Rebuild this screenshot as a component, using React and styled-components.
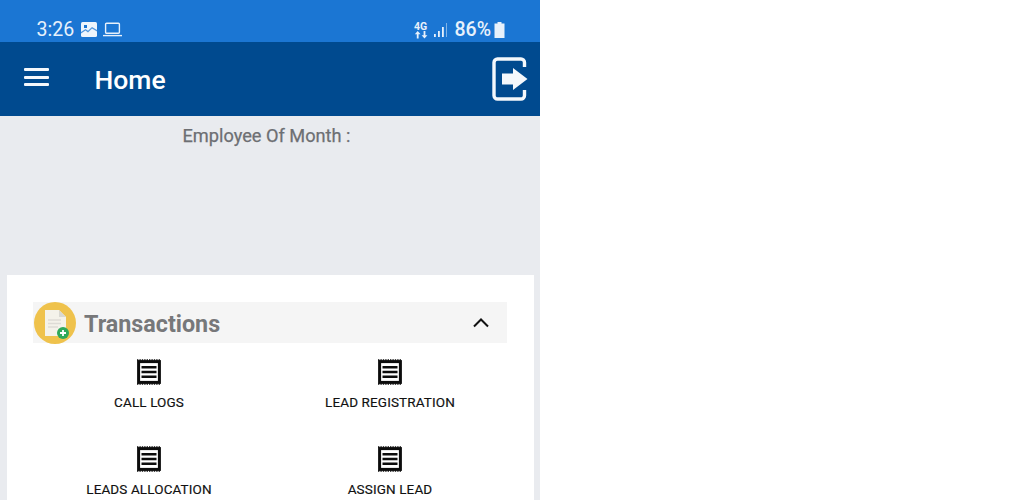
import React from "react";
import styled, { createGlobalStyle } from "styled-components";

const Global = createGlobalStyle`
  html, body { margin: 0; padding: 0; background: #fff; overflow: hidden; }
  body { font-family: Roboto, "Liberation Sans", sans-serif; }
`;

const Phone = styled.div`
  width: 540px;
  height: 500px;
  background: #e9ebef;
  display: flex;
  flex-direction: column;
  overflow: hidden;
`;

const StatusBar = styled.div`
  height: 42px;
  flex: none;
  box-sizing: border-box;
  background: #1b76d3;
  color: #e8f1fb;
  display: flex;
  align-items: center;
  padding: 17px 35px 0 36.5px;
`;

const Time = styled.span`
  font-size: 19.5px;
  line-height: 24px;
  margin-right: 7px;
`;

const StatusGroup = styled.div`
  display: flex;
  align-items: center;
  gap: 6px;
`;

const Spacer = styled.div`
  flex: 1;
`;

const Battery = styled.span`
  font-size: 19.5px;
  font-weight: 500;
  line-height: 24px;
  margin: 0 -3px 0 0;
`;

const AppBar = styled.header`
  height: 74px;
  flex: none;
  box-sizing: border-box;
  background: #004a8f;
  color: #fff;
  display: flex;
  align-items: center;
  padding: 0 12px 0 24px;
`;

const MenuButton = styled.div`
  width: 25px;
  height: 18px;
  display: flex;
  flex-direction: column;
  justify-content: space-between;
  margin: 0 45.5px 4px 0;
`;

const MenuLine = styled.span`
  display: block;
  height: 3px;
  border-radius: 1px;
  background: #f4f8fc;
`;

const Title = styled.h1`
  margin: 2px 0 0;
  flex: 1;
  font-size: 26.5px;
  font-weight: 500;
  line-height: 32px;
`;

const Intro = styled.div`
  height: 159px;
  flex: none;
  box-sizing: border-box;
  padding: 8px 7px 0 0;
  text-align: center;
  color: #6d6f73;
  font-size: 18.2px;
  font-weight: 400;
  -webkit-text-stroke: 0.25px #6d6f73;
  line-height: 24px;
`;

const Card = styled.section`
  flex: 1;
  margin: 0 6px 0 7px;
  background: #fff;
  padding: 27px 27px 0 26px;
`;

const SectionHeader = styled.div`
  height: 41px;
  background: #f5f5f5;
  display: flex;
  align-items: center;
  padding-right: 17px;
`;

const Badge = styled.div`
  width: 42px;
  height: 42px;
  flex: none;
  margin-left: 1px;
  margin-right: 8px;
`;

const SectionTitle = styled.h2`
  margin: 2px 0 0;
  flex: 1;
  color: #77787a;
  font-size: 23.3px;
  font-weight: 700;
  line-height: 28px;
`;

const Grid = styled.div`
  display: grid;
  grid-template-columns: 232px 250px;
  grid-auto-rows: 87px;
  padding-top: 16px;
`;

const Tile = styled.div`
  display: flex;
  flex-direction: column;
  align-items: center;
`;

const TileLabel = styled.span`
  margin-top: 8px;
  color: #111;
  font-size: 13.5px;
  font-weight: 400;
  -webkit-text-stroke: 0.15px #111;
  line-height: 18px;
  letter-spacing: 0.12px;
  white-space: nowrap;
`;

const ReceiptIcon = () => (
  <svg width="26" height="26" viewBox="0 0 26 26" fill="none">
    <rect x="2.6" y="2.6" width="20.8" height="20.8" stroke="#0c0c0c" strokeWidth="3" />
    <path d="M1 1H25M1 25H25" stroke="#0c0c0c" strokeWidth="1.6" strokeDasharray="1.4 1" />
    <path d="M5.5 8.3H20.5M5.5 13H20.5M5.5 17.7H20.5" stroke="#0c0c0c" strokeWidth="2.4" />
  </svg>
);

const GalleryIcon = () => (
  <svg width="16" height="16" viewBox="0 0 16 16">
    <rect width="16" height="15" rx="1.5" fill="#eef5fc" />
    <rect x="3" y="3" width="3" height="3" fill="#1b76d3" />
    <path d="M0 11.5 4.5 8.5l2.5 2L11 6.5l5 3V8L11 5 7 8.8 4.5 7 0 10Z" fill="#1b76d3" opacity="0.75" />
  </svg>
);

const LaptopIcon = () => (
  <svg width="19" height="16" viewBox="0 0 19 16" fill="none" stroke="#e8f1fb" strokeWidth="1.4">
    <rect x="2.6" y="1.2" width="13.8" height="10" rx="1" />
    <path d="M0 13.6H19" />
  </svg>
);

const NetworkIcon = () => (
  <svg width="14" height="18" viewBox="0 0 14 18" fill="#e8f1fb">
    <text x="0" y="8.5" fontSize="10.5" fontWeight="700" fontFamily="Roboto, sans-serif">4G</text>
    <path d="M.8 13.2 3.7 10 6.6 13.2H4.6V17.5H2.8V13.2Z" />
    <path d="M8.6 10H10.4V14.3H12.4L9.5 17.5 6.6 14.3H8.6Z" transform="translate(1 0)" />
  </svg>
);

const SignalIcon = () => (
  <svg width="14" height="16" viewBox="0 0 14 16" fill="#e8f1fb">
    <rect x="0" y="12" width="1.8" height="3" />
    <rect x="4" y="9" width="1.8" height="6" />
    <rect x="8" y="5" width="1.8" height="10" />
    <rect x="12" y="1" width="1" height="14" opacity="0.5" />
  </svg>
);

const BatteryIcon = () => (
  <svg width="11" height="16" viewBox="0 0 11 16" fill="#e8f1fb">
    <path d="M3.5 0H7.5V1.5H10.5V16H.5V1.5H3.5Z" />
  </svg>
);

const ExitIcon = () => (
  <svg width="36" height="44" viewBox="0 0 36 44" fill="none">
    <path
      d="M32.5 10V5.5A3.5 3.5 0 0 0 29 2H5.5A3.5 3.5 0 0 0 2 5.5V38.5A3.5 3.5 0 0 0 5.5 42H29A3.5 3.5 0 0 0 32.5 38.5V33"
      stroke="#f4f8fc"
      strokeWidth="3.4"
    />
    <path d="M10 16.5H21V11L35.5 22 21 33V27.5H10Z" fill="#f4f8fc" />
  </svg>
);

const DocumentBadge = () => (
  <svg width="42" height="42" viewBox="0 0 42 42">
    <circle cx="21" cy="21" r="21" fill="#efc24c" />
    <path d="M11 8H25L32 15V34H11Z" fill="#f4f2ea" />
    <path d="M25 8L32 15H25Z" fill="#d9d8d2" />
    <path d="M14 18H27M14 21.5H27M14 25H24" stroke="#dedcd6" strokeWidth="1.6" />
    <circle cx="29" cy="31" r="6" fill="#2fa95a" />
    <path d="M29 28V34M26 31H32" stroke="#fff" strokeWidth="1.8" />
  </svg>
);

const ChevronUp = () => (
  <svg width="18" height="11" viewBox="0 0 18 11" fill="none" stroke="#111" strokeWidth="2">
    <path d="M2 9.5 9 2.5 16 9.5" />
  </svg>
);

const items = ["CALL LOGS", "LEAD REGISTRATION", "LEADS ALLOCATION", "ASSIGN LEAD"];

export default function App() {
  return (
    <>
      <Global />
      <Phone>
        <StatusBar>
          <Time>3:26</Time>
          <StatusGroup>
            <GalleryIcon />
            <LaptopIcon />
          </StatusGroup>
          <Spacer />
          <StatusGroup>
            <NetworkIcon />
            <SignalIcon />
            <Battery>86%</Battery>
            <BatteryIcon />
          </StatusGroup>
        </StatusBar>
        <AppBar>
          <MenuButton>
            <MenuLine />
            <MenuLine />
            <MenuLine />
          </MenuButton>
          <Title>Home</Title>
          <ExitIcon />
        </AppBar>
        <Intro>Employee Of Month :</Intro>
        <Card>
          <SectionHeader>
            <Badge>
              <DocumentBadge />
            </Badge>
            <SectionTitle>Transactions</SectionTitle>
            <ChevronUp />
          </SectionHeader>
          <Grid>
            {items.map((label) => (
              <Tile key={label}>
                <ReceiptIcon />
                <TileLabel>{label}</TileLabel>
              </Tile>
            ))}
          </Grid>
        </Card>
      </Phone>
    </>
  );
}
